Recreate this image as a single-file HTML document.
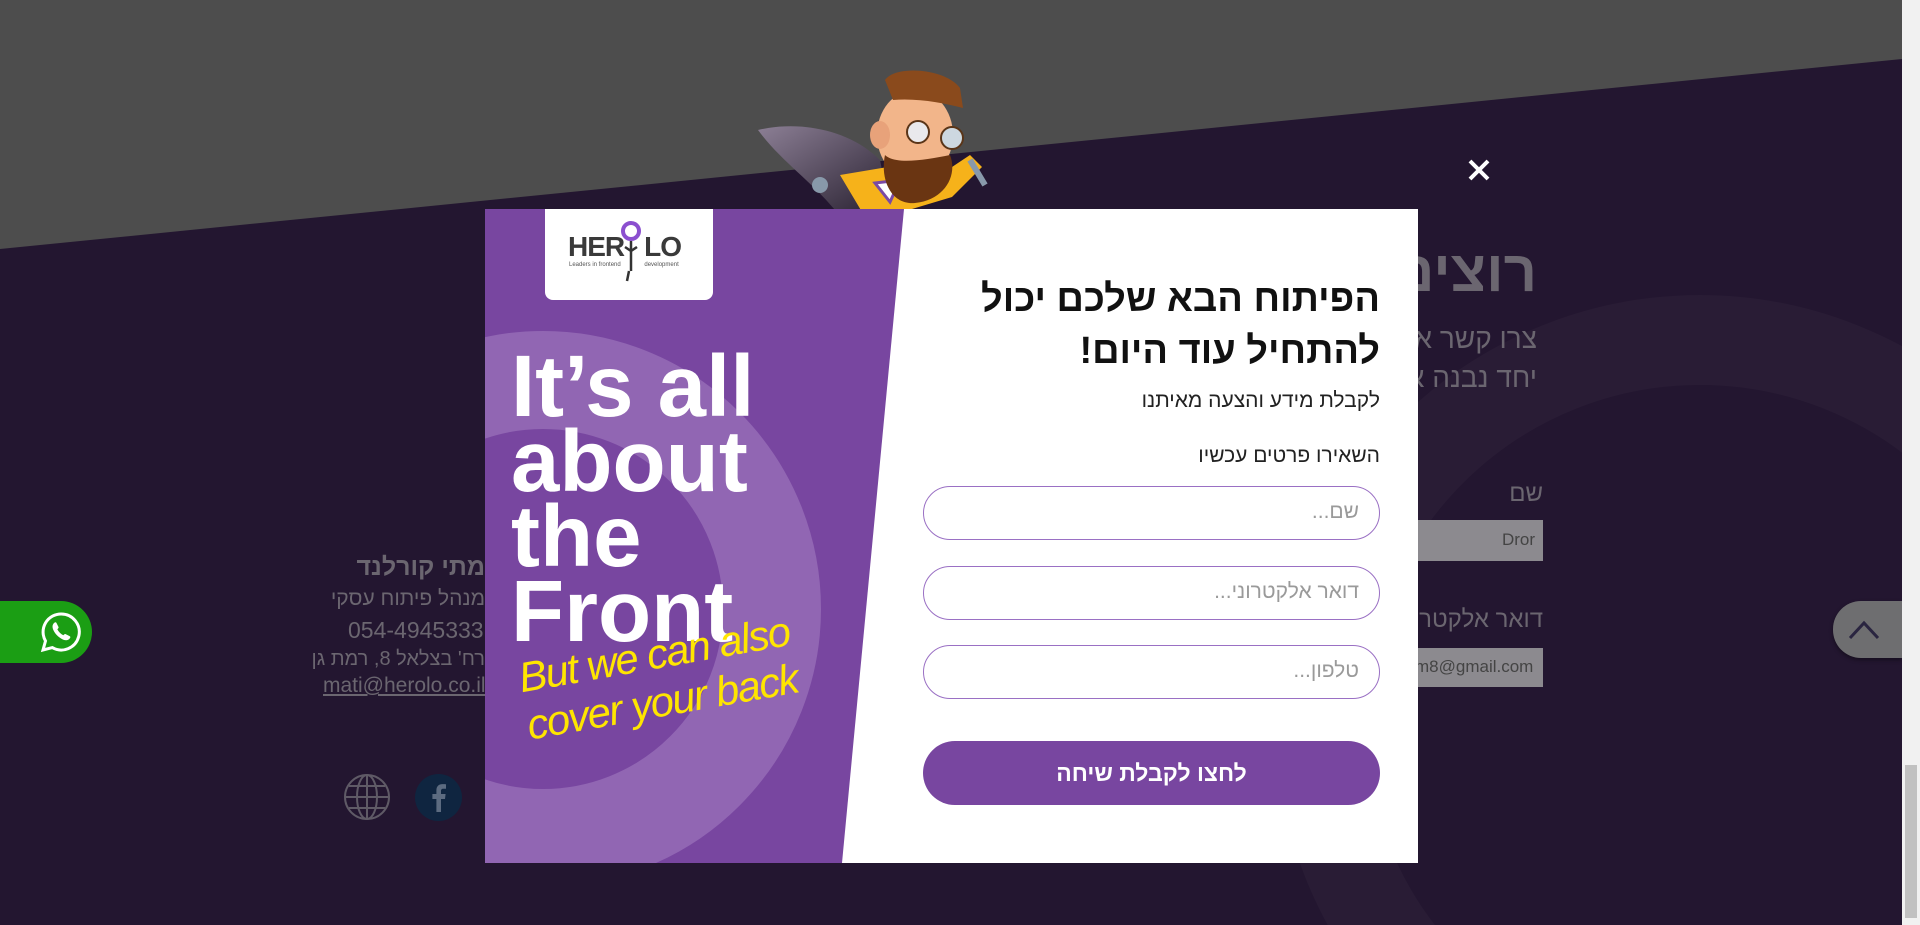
<!DOCTYPE html>
<html><head><meta charset="utf-8"><style>
*{margin:0;padding:0;box-sizing:border-box}
html,body{width:1920px;height:925px;overflow:hidden}
body{background:#231630;position:relative;font-family:"Liberation Sans","Noto Sans CJK SC",sans-serif}
.abs{position:absolute}
.bg{color:#6b6670}
.rtl{direction:rtl;text-align:right}
.inp{position:absolute;left:923px;width:457px;height:54px;border:1.5px solid #9a70c4;border-radius:27px;background:#fff;direction:rtl;font-size:21px;color:#9a9a9a;padding:13px 20px 0 0}
</style></head><body>
<svg class="abs" style="left:0;top:0" width="1920" height="925">
<polygon points="0,0 1902,0 1902,59 0,249" fill="#4d4d4d"/>
<circle cx="1700" cy="720" r="380" fill="none" stroke="#291c35" stroke-width="90"/>
</svg>
<div class="abs bg rtl" style="right:383px;top:238px;font-size:58px;font-weight:bold">רוצים</div>
<div class="abs bg rtl" style="right:383px;top:323px;font-size:28px">צרו קשר א</div>
<div class="abs bg rtl" style="right:383px;top:362px;font-size:28px">יחד נבנה א</div>
<div class="abs bg rtl" style="right:377px;top:480px;font-size:24px">שם</div>
<div class="abs rtl" style="left:1400px;top:520px;width:143px;height:41px;background:#8c8a8f;color:#444;font-size:17px;padding:10px 8px 0 0">Dror</div>
<div class="abs bg rtl" style="right:377px;top:606px;font-size:24px">דואר אלקטרוני</div>
<div class="abs" style="left:1400px;top:648px;width:143px;height:39px;background:#8c8a8f;color:#444;font-size:17px;padding:9px 0 0 15px">m8@gmail.com</div>
<div class="abs bg rtl" style="right:1435px;top:553px;font-size:25px;font-weight:bold">מתי קורלנד</div>
<div class="abs bg rtl" style="right:1435px;top:587px;font-size:21px">מנהל פיתוח עסקי</div>
<div class="abs bg" style="left:348px;top:617px;font-size:23px">054-4945333</div>
<div class="abs bg rtl" style="right:1435px;top:648px;font-size:20px">רח' בצלאל 8, רמת גן</div>
<div class="abs bg" style="left:323px;top:674px;font-size:21px;text-decoration:underline">mati@herolo.co.il</div>
<svg class="abs" style="left:343px;top:773px" width="48" height="48" viewBox="0 0 48 48" fill="none" stroke="#5f5a66" stroke-width="2"><circle cx="24" cy="24" r="22"/><ellipse cx="24" cy="24" rx="10" ry="22"/><line x1="24" y1="2" x2="24" y2="46"/><line x1="2" y1="24" x2="46" y2="24"/><path d="M6 13h36M6 35h36"/></svg>
<svg class="abs" style="left:415px;top:774px" width="47" height="47" viewBox="0 0 47 47"><circle cx="23.5" cy="23.5" r="23.5" fill="#0f2540"/><path d="M26 38V25h4l.6-5H26v-3c0-1.4.5-2.3 2.4-2.3H31v-4.4c-.5-.1-2-.2-3.6-.2-3.6 0-6 2.2-6 6.1V20h-4v5h4v13z" fill="#5c6b80"/></svg>
<div class="abs" style="left:0;top:601px;width:92px;height:62px;background:#1b9e14;border-radius:0 31px 31px 0"></div>
<svg class="abs" style="left:40px;top:611px" width="42" height="42" viewBox="0 0 42 42"><path d="M21 3a18 18 0 0 0-15.5 27L3 39l9.3-2.4A18 18 0 1 0 21 3z" fill="none" stroke="#fff" stroke-width="3"/><path d="M14 12c1-1 2-1 2.5 0l2 4c.3.8-.5 1.6-1.2 2.3 1.4 2.7 3.4 4.6 6 6 .7-.7 1.5-1.5 2.3-1.2l4 2c1 .5 1 1.5 0 2.5-2 2.2-4.5 2-7.5.5-3.5-1.8-6.5-4.8-8.4-8.4-1.5-3-1.7-5.6.3-7.7z" fill="#fff"/></svg>
<div class="abs" style="left:1833px;top:601px;width:69px;height:57px;background:#6e6e70;border-radius:28px 0 0 28px;box-shadow:0 2px 4px rgba(0,0,0,.4)"></div>
<svg class="abs" style="left:1847px;top:614px" width="34" height="30"><path d="M3 24L17 9l14 15" fill="none" stroke="#2a2540" stroke-width="3"/></svg>
<div class="abs" style="left:1902px;top:0;width:18px;height:925px;background:#f1f1f1"></div>
<div class="abs" style="left:1905px;top:765px;width:12px;height:153px;background:#c1c1c1"></div>
<svg class="abs" style="left:1467px;top:158px" width="24" height="24"><path d="M3 3L21 21M21 3L3 21" stroke="#fff" stroke-width="4"/></svg>
<svg class="abs" style="left:740px;top:60px" width="280" height="160" viewBox="0 0 280 160">
<defs><linearGradient id="cp" x1="0" y1="0" x2="1" y2="1"><stop offset="0" stop-color="#8c7f95"/><stop offset="1" stop-color="#2a2232"/></linearGradient></defs>
<path d="M18 70C60 60 110 70 140 100L150 150 95 150C70 120 40 100 18 70z" fill="url(#cp)"/>
<path d="M100 115l60-10 40 10 30-20 12 12-30 30-50 15-40 0z" fill="#f6b21a"/>
<path d="M135 123l25-3-10 22z" fill="#fff" stroke="#7a4aa5" stroke-width="3"/>
<circle cx="80" cy="125" r="8" fill="#8899aa"/>
<path d="M230 100l15 25" stroke="#8899aa" stroke-width="6"/>
<ellipse cx="175" cy="75" rx="38" ry="45" fill="#f2b58a"/>
<ellipse cx="140" cy="75" rx="10" ry="14" fill="#e8a27a"/>
<path d="M145 20c10-15 60-12 75 8l3 20c-20-5-45-10-70-8z" fill="#8a4a1c"/>
<path d="M145 95c10 10 40 5 65 0 8 20-5 45-35 48-25 2-35-25-30-48z" fill="#6a3512"/>
<circle cx="178" cy="72" r="11" fill="#e9e9ec" stroke="#5a3518" stroke-width="2"/>
<circle cx="212" cy="78" r="11" fill="#cdd8e0" stroke="#5a3518" stroke-width="2"/>
</svg>
<div class="abs" style="left:485px;top:209px;width:933px;height:654px;background:#fff;overflow:hidden">
<svg class="abs" style="left:0;top:0" width="933" height="654">
<defs><clipPath id="lp"><polygon points="0,0 419,0 357,654 0,654"/></clipPath></defs>
<g clip-path="url(#lp)">
<rect width="933" height="654" fill="#7846a0"/>
<circle cx="58" cy="400" r="229" fill="none" stroke="#9166b3" stroke-width="98"/>
</g>
</svg>
<div class="abs" style="left:60px;top:0;width:168px;height:91px;background:#fff;border-radius:0 0 8px 8px;overflow:hidden">
<div class="abs" style="left:23px;top:22px;font-size:28px;font-weight:bold;color:#3a3a3a;letter-spacing:-1px">HER<span style="display:inline-block;width:20px"></span>LO</div>
<svg class="abs" style="left:76px;top:10px" width="20" height="70"><circle cx="10" cy="12" r="8" fill="none" stroke="#8b4fcf" stroke-width="4"/><path d="M10 22v30M4 28l6 4 6-4M8 52l-2 10" stroke="#333" stroke-width="2.5" fill="none"/></svg>
<div class="abs" style="left:24px;top:53px;font-size:6px;color:#555;white-space:nowrap">Leaders in frontend <span style="margin-left:22px">development</span></div>
</div>
<div class="abs" style="left:26px;top:140px;color:#fff;font-weight:bold;font-size:87px;line-height:75px">It’s all<br>about<br>the<br>Front</div>
<div class="abs" style="left:30px;top:446px;color:#ffe500;font-style:italic;font-size:42px;line-height:48px;font-family:'Liberation Sans Narrow','Liberation Sans',sans-serif;transform:rotate(-10deg);transform-origin:left top;letter-spacing:-1.5px;white-space:nowrap">But we can also<br>cover your back</div>
<div class="abs rtl" style="right:38px;top:64px;font-size:38px;font-weight:bold;line-height:52px;color:#111">הפיתוח הבא שלכם יכול<br>להתחיל עוד היום!</div>
<div class="abs rtl" style="right:38px;top:180px;font-size:21px;color:#222">לקבלת מידע והצעה מאיתנו</div>
<div class="abs rtl" style="right:38px;top:235px;font-size:21px;color:#222">השאירו פרטים עכשיו</div>
</div>
<div class="inp" style="top:486px">שם...</div>
<div class="inp" style="top:566px">דואר אלקטרוני...</div>
<div class="inp" style="top:645px">טלפון...</div>
<div class="abs" style="left:923px;top:741px;width:457px;height:64px;background:#7846a0;border-radius:32px;color:#fff;font-weight:bold;font-size:23px;text-align:center;line-height:64px;direction:rtl">לחצו לקבלת שיחה</div>
</body></html>
